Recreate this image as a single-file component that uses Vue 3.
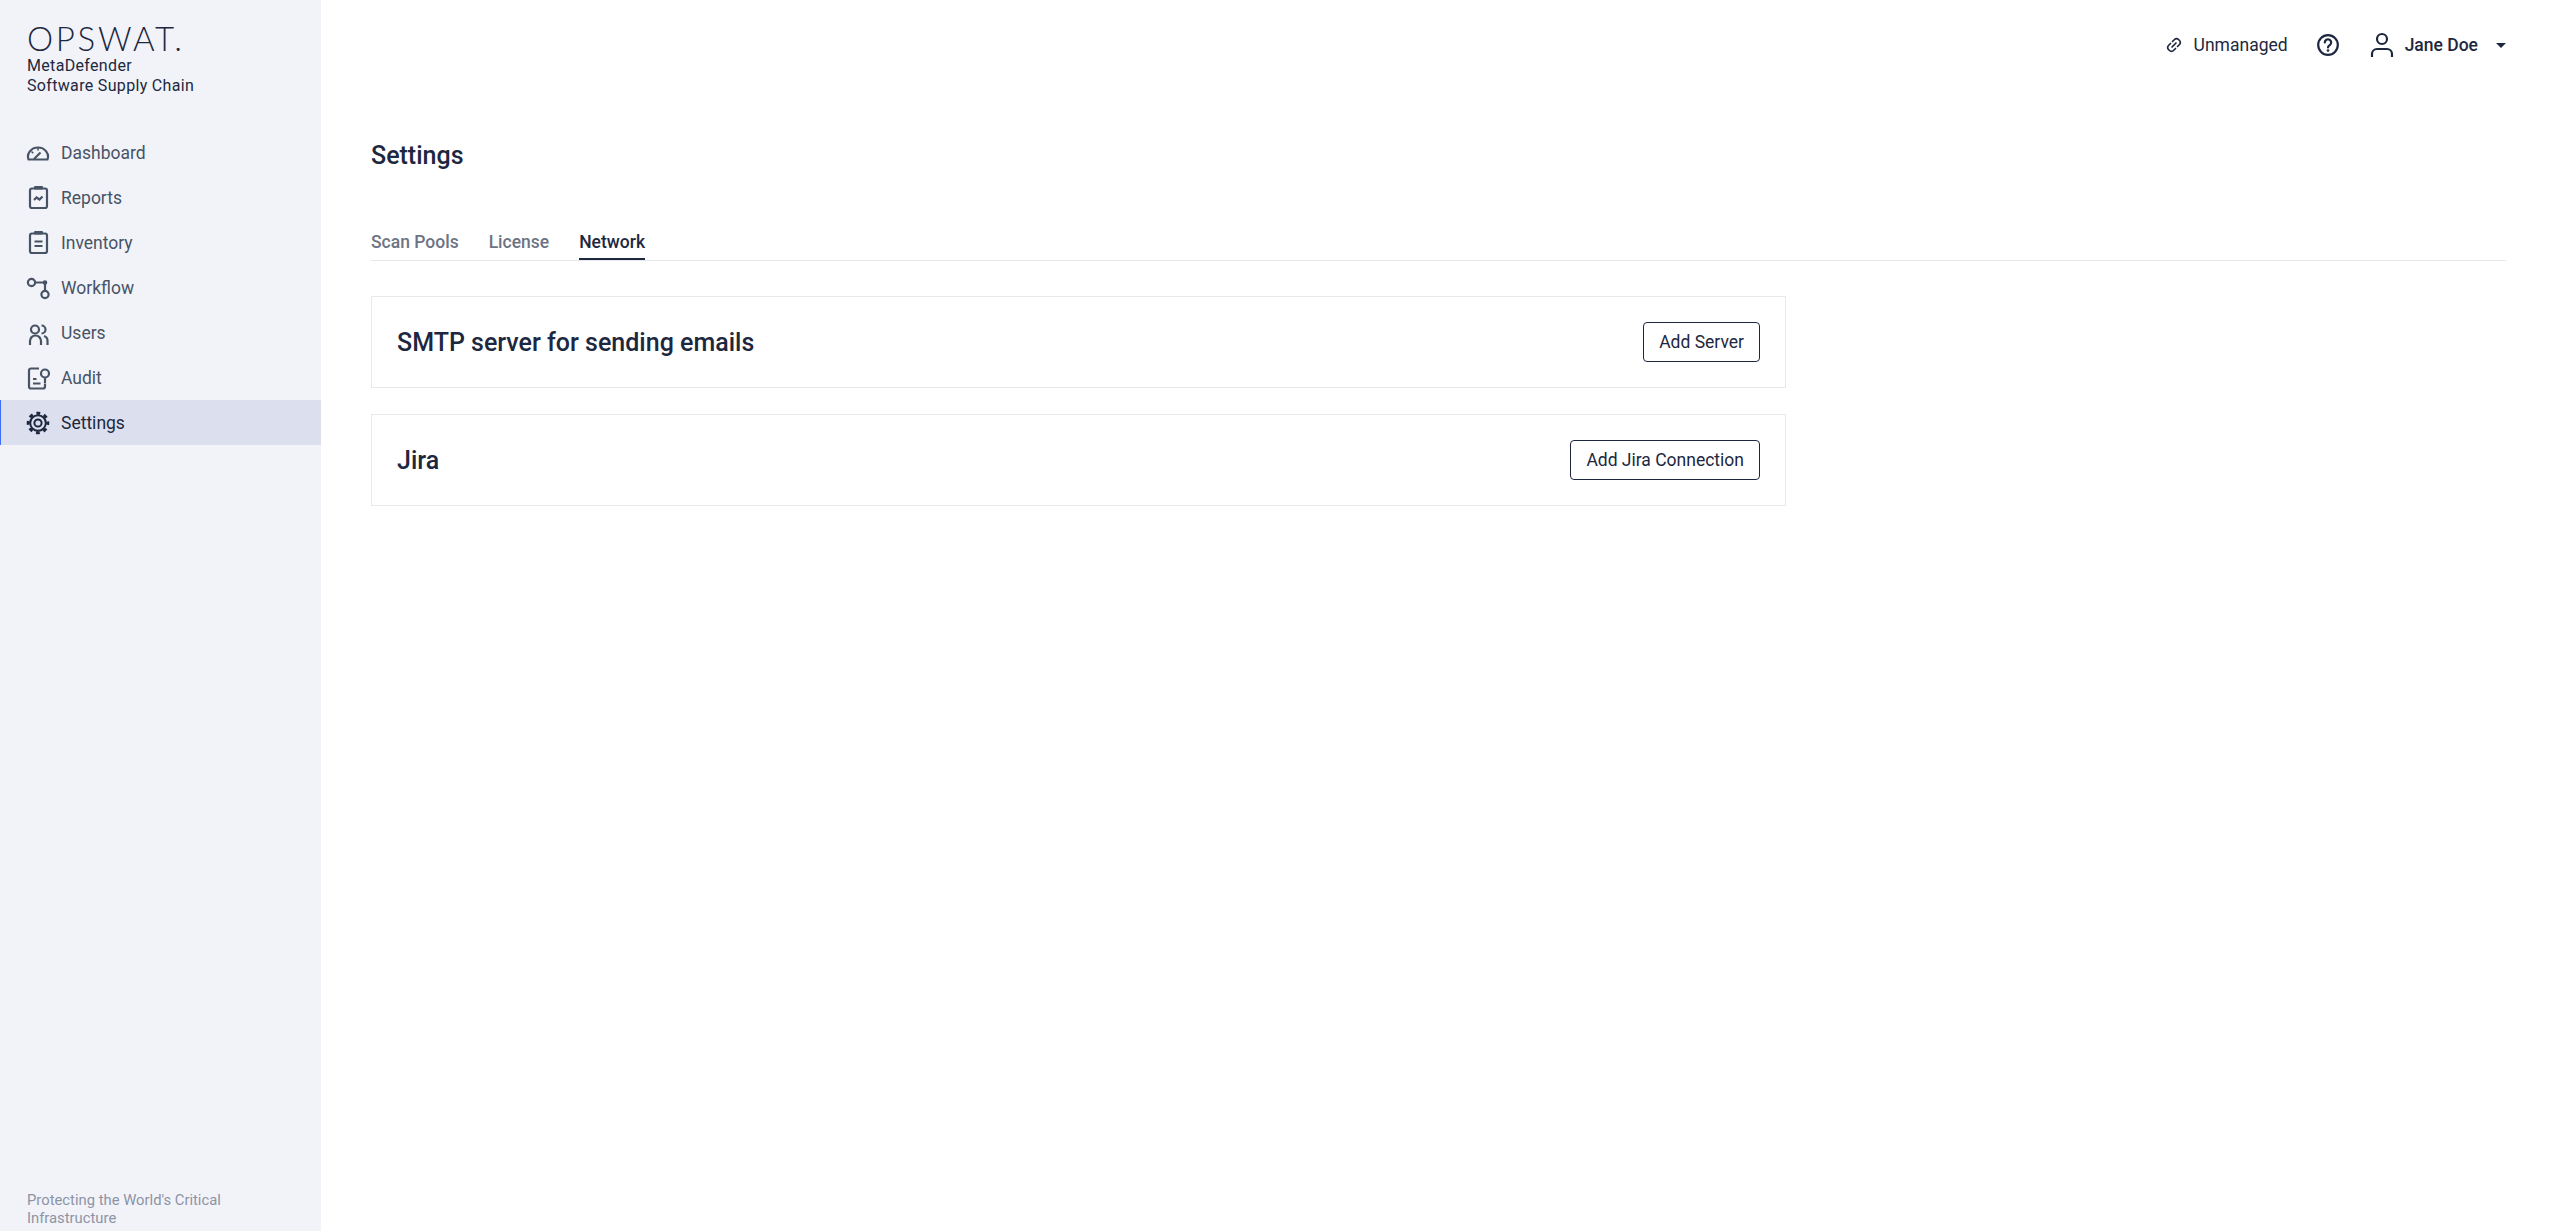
<script setup>
const navItems = [
  { label: 'Dashboard', icon: 'dashboard' },
  { label: 'Reports', icon: 'reports' },
  { label: 'Inventory', icon: 'inventory' },
  { label: 'Workflow', icon: 'workflow' },
  { label: 'Users', icon: 'users' },
  { label: 'Audit', icon: 'audit' },
  { label: 'Settings', icon: 'settings', active: true },
]

const tabs = [
  { label: 'Scan Pools' },
  { label: 'License' },
  { label: 'Network', active: true },
]

const cards = [
  { title: 'SMTP server for sending emails', action: 'Add Server' },
  { title: 'Jira', action: 'Add Jira Connection' },
]
</script>

<template>
  <div class="page">
    <aside class="sidebar">
      <div class="brand">
        <div class="logo">OPSWAT.</div>
        <div class="product">MetaDefender<br />Software Supply Chain</div>
      </div>
      <nav class="nav">
        <a v-for="item in navItems" :key="item.label" class="nav-item" :class="{ active: item.active }">
          <svg class="nav-icon" viewBox="0 0 24 24" fill="none" stroke="currentColor" stroke-width="2.200">
            <template v-if="item.icon === 'dashboard'">
              <path d="M2.570 18.500A10 9 0 1 1 21.430 18.500Z" stroke-linejoin="round" />
              <path d="M8 18l6.500-6.500" />
              <path d="M12 7v2.500M5.500 10.500l1.800 1.800" stroke-width="1.500" />
            </template>
            <template v-else-if="item.icon === 'reports'">
              <rect x="4" y="2.500" width="17" height="19.500" rx="2" />
              <rect x="8" y="0" width="9" height="3.500" rx="1" fill="currentColor" stroke="none" />
              <path d="M8 14l2.500-2.500 3 2 3-3" />
            </template>
            <template v-else-if="item.icon === 'inventory'">
              <rect x="4" y="2.500" width="17" height="19.500" rx="2" />
              <rect x="8" y="0" width="9" height="3.500" rx="1" fill="currentColor" stroke="none" />
              <path d="M8.500 10.500h8M8.500 15h8" />
            </template>
            <template v-else-if="item.icon === 'workflow'">
              <circle cx="5.500" cy="6.500" r="3.600" />
              <circle cx="19" cy="18.500" r="3.600" />
              <path d="M9.100 6.500H19M19 6.500v8.500" />
              <circle cx="19" cy="6.500" r="1.200" fill="currentColor" />
            </template>
            <template v-else-if="item.icon === 'users'">
              <circle cx="9" cy="8.500" r="4" />
              <path d="M15.500 4.500a4 4 0 0 1 0 8" />
              <path d="M4 24v-4a5.500 5.500 0 0 1 11 0v4" />
              <path d="M18 15a5 5 0 0 1 3.500 5v4" />
            </template>
            <template v-else-if="item.icon === 'audit'">
              <path d="M13 2.500H5a2 2 0 0 0-2 2v16a2 2 0 0 0 2 2h12a2 2 0 0 0 2-2v-3" />
              <path d="M7 13h3.500M7 17.500h7.500" />
              <circle cx="19" cy="7.500" r="4" />
              <path d="M19 11.500V17" />
            </template>
            <template v-else>
              <circle cx="12" cy="12" r="9.800" stroke-width="3" stroke-dasharray="3.800 3.900" stroke-dashoffset="1.900" />
              <circle cx="12" cy="12" r="7.800" stroke-width="2" />
              <circle cx="12" cy="12" r="3.600" stroke-width="2" />
            </template>
          </svg>
          <span>{{ item.label }}</span>
        </a>
      </nav>
      <p class="tagline">Protecting the World's Critical Infrastructure</p>
    </aside>

    <main class="main">
      <header class="topbar">
        <div class="managed">
          <svg class="link-icon" viewBox="0 0 16 16" fill="none" stroke="currentColor" stroke-width="1.700" stroke-linecap="round">
            <path d="M6.500 4.500l2-2a2.800 2.800 0 0 1 4 0l1 1a2.800 2.800 0 0 1 0 4l-2 2" />
            <path d="M9.500 11.500l-2 2a2.800 2.800 0 0 1-4 0l-1-1a2.800 2.800 0 0 1 0-4l2-2" />
            <path d="M6 10l4-4" />
          </svg>
          <span>Unmanaged</span>
        </div>
        <svg class="help-icon" viewBox="0 0 24 24" fill="none" stroke="currentColor" stroke-width="2.200">
          <circle cx="12" cy="12" r="9.800" />
          <path d="M8.800 9.500a3.200 3.200 0 1 1 4.900 2.700c-1 .7-1.700 1.200-1.700 2.300" stroke-linecap="round" />
          <circle cx="12" cy="17.500" r="1.300" fill="currentColor" stroke="none" />
        </svg>
        <div class="user">
          <svg class="user-icon" viewBox="0 0 24 26" fill="none" stroke="currentColor" stroke-width="2.200">
            <circle cx="12" cy="7" r="5" />
            <path d="M2 25v-3c0-2.800 2.200-5 5-5h10c2.800 0 5 2.200 5 5v3" />
          </svg>
          <span class="user-name">Jane Doe</span>
          <span class="caret"></span>
        </div>
      </header>

      <section class="content">
        <h1 class="title">Settings</h1>
        <div class="tabs">
          <a v-for="tab in tabs" :key="tab.label" class="tab" :class="{ active: tab.active }">{{ tab.label }}</a>
        </div>
        <div class="cards">
          <div v-for="card in cards" :key="card.title" class="card">
            <h2 class="card-title">{{ card.title }}</h2>
            <button class="btn" type="button">{{ card.action }}</button>
          </div>
        </div>
      </section>
    </main>
  </div>
</template>

<style scoped>
.page {
  display: flex;
  min-height: 100vh;
  font-family: Roboto, "Liberation Sans", sans-serif;
  font-size: 17.5px;
  color: #1d2840;
  background: #fff;
}
.sidebar {
  flex: 0 0 321px;
  display: flex;
  flex-direction: column;
  background: #f1f3f9;
}
.brand {
  padding: 21px 27px 0;
  height: 130px;
  box-sizing: border-box;
}
.logo {
  font-family: Lato, Roboto, sans-serif;
  font-weight: 300;
  font-size: 33px;
  line-height: 34px;
  letter-spacing: 2.700px;
  color: #1d2840;
}
.product {
  margin-top: 1px;
  font-size: 16px;
  line-height: 20px;
  letter-spacing: 0.330px;
  color: #1d2840;
}
.nav {
  display: flex;
  flex-direction: column;
}
.nav-item {
  display: flex;
  align-items: center;
  gap: 11px;
  height: 45px;
  padding-left: 26px;
  box-sizing: border-box;
  color: #485366;
}
.nav-item.active {
  background: #dce0ee;
  color: #1d2840;
  box-shadow: inset 1px 0 0 #3d6df5;
}
.nav-icon {
  width: 24px;
  height: 24px;
  flex: none;
}
.tagline {
  margin: auto 27px 4px;
  font-size: 14.800px;
  line-height: 18px;
  color: #8d94a5;
}
.main {
  flex: 1;
  min-width: 0;
  padding-right: 45px;
}
.topbar {
  display: flex;
  align-items: center;
  justify-content: flex-end;
  height: 90px;
}
.managed {
  display: flex;
  align-items: center;
  gap: 12px;
  margin-right: 28px;
}
.link-icon {
  width: 16px;
  height: 16px;
}
.help-icon {
  width: 24px;
  height: 24px;
  margin-right: 30px;
}
.user {
  display: flex;
  align-items: center;
}
.user-icon {
  width: 24px;
  height: 26px;
  margin-right: 11px;
}
.user-name {
  font-weight: 500;
}
.caret {
  margin-left: 18px;
  border-left: 5px solid transparent;
  border-right: 5px solid transparent;
  border-top: 5px solid #1d2840;
}
.content {
  padding-left: 50px;
}
.title {
  margin: 51px 0 0;
  font-size: 25px;
  line-height: 30px;
  font-weight: 500;
}
.tabs {
  display: flex;
  gap: 30px;
  margin-top: 61px;
  border-bottom: 1px solid #e8e9ec;
}
.tab {
  padding-bottom: 6px;
  line-height: 20px;
  font-weight: 500;
  color: #6c7484;
  border-bottom: 2px solid transparent;
}
.tab.active {
  color: #1d2840;
  border-bottom-color: #1d2840;
}
.cards {
  display: flex;
  flex-direction: column;
  gap: 26px;
  width: 1415px;
  margin-top: 35px;
}
.card {
  display: flex;
  align-items: center;
  justify-content: space-between;
  height: 92px;
  padding: 0 25px;
  box-sizing: border-box;
  border: 1px solid #e8e9ec;
}
.card-title {
  margin: 0;
  font-size: 25px;
  font-weight: 500;
}
.btn {
  height: 40px;
  padding: 0 15px;
  font: inherit;
  color: #1d2840;
  background: #fff;
  border: 1px solid #1d2840;
  border-radius: 4px;
}
</style>
